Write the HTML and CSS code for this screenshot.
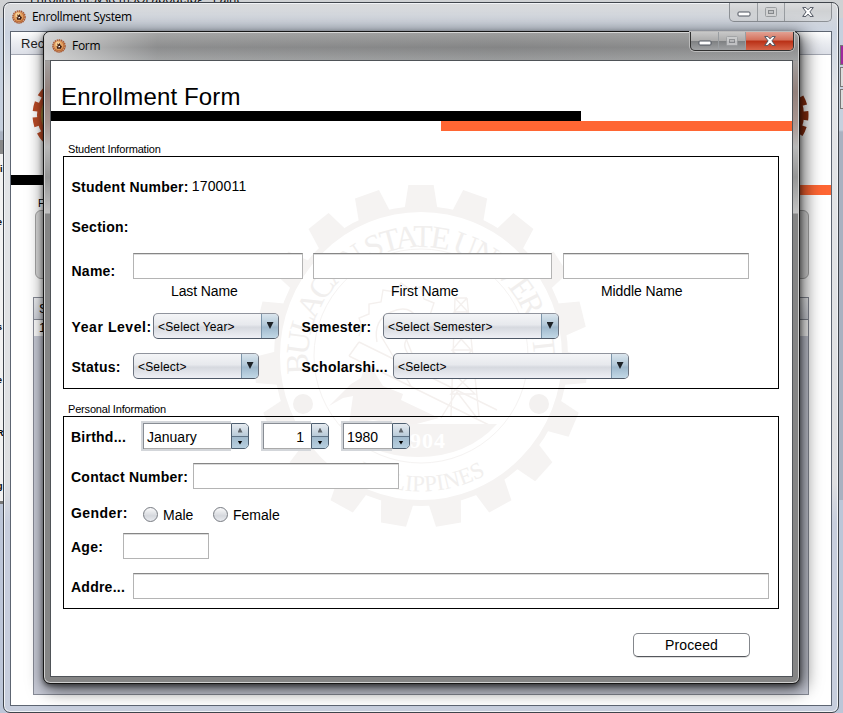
FILE: index.html
```html
<!DOCTYPE html>
<html lang="en">
<head>
<meta charset="utf-8">
<title>Enrollment System</title>
<link rel="stylesheet" href="styles.css">
</head>
<body>
<svg class="defs" width="0" height="0">
  <defs>
    <symbol id="badge" viewBox="0 0 14 14">
      <circle cx="7" cy="7" r="6" fill="none" stroke="#a8572f" stroke-width="1.6" stroke-dasharray="1.5 .6"/>
      <circle cx="7" cy="7" r="5.6" fill="#c0703a"/>
      <circle cx="6.6" cy="6.4" r="4.6" fill="#e3a061"/>
      <circle cx="6" cy="5" r="2.6" fill="#f6cf96"/>
      <path d="M5.2 4.2l1.6 1.4 1-1.8 .7 2.4 1.4 1-1 2.6H5.2L4.6 7l1.2.4z" fill="#3b1b10"/>
      <path d="M6.3 7.2l1.5-.5.3 1.3-1.6.6z" fill="#fff"/>
    </symbol>
    <symbol id="min" viewBox="0 0 14 6"><rect x="1" y="1" width="12" height="4" rx="1" fill="#fff" stroke="#505661"/></symbol>
    <symbol id="max" viewBox="0 0 12 10"><rect x=".5" y=".5" width="11" height="9" rx="1" fill="#d2d3d4" stroke="#9b9ea1"/><rect x="3.5" y="3.5" width="5" height="3" fill="#bfc1c3" stroke="#86898c"/></symbol>
    <symbol id="close" viewBox="0 0 12 10"><path d="M.7.6H4L6 2.8 8 .6h3.3L7.9 4.9l3.4 4.5H8L6 7.1 4 9.4H.7l3.4-4.5z" fill="#fff" stroke="#505661"/></symbol>
  </defs>
</svg>

<div class="desktop">
  <div class="paint-title">EnrollmentSystemSOLabout.jpg - Paint</div>
  <div class="left-edge"><span>i</span><span>e</span><span>t</span><span>s</span><span>e</span><span>R</span><span>g</span></div>
  <div class="right-edge"><i></i><i></i><i></i></div>

  <section class="window back">
    <header class="titlebar">
      <svg class="app-icon"><use href="#badge"/></svg><span>Enrollment System</span>
      <div class="controls"><b><svg class="i-min"><use href="#min"/></svg></b><b><svg class="i-max"><use href="#max"/></svg></b><b class="x"><svg class="i-close"><use href="#close"/></svg></b></div>
    </header>
    <div class="client">
      <div class="menubar">Records</div>
      <div class="masthead">
        <svg width="60" height="70" viewBox="0 0 60 70"><g class="cog"><circle cx="41" cy="35" r="33"/><circle class="teeth" cx="41" cy="35" r="36"/></g></svg>
        <svg width="60" height="70" viewBox="0 0 60 70"><g class="cog dark"><circle cx="19" cy="35" r="33"/><circle class="teeth" cx="19" cy="35" r="36"/></g></svg>
      </div>
      <div class="rule black"></div>
      <div class="rule orange"></div>
      <div class="filter-label">Filter</div>
      <div class="filter-box"></div>
      <div class="table"><div class="thead">Student</div><div class="trow">1</div></div>
    </div>
  </section>

  <section class="window front">
    <header class="titlebar">
      <svg class="app-icon"><use href="#badge"/></svg><span>Form</span>
      <div class="controls"><b><svg class="i-min"><use href="#min"/></svg></b><b><svg class="i-max"><use href="#max"/></svg></b><b class="x"><svg class="i-close"><use href="#close"/></svg></b></div>
    </header>
    <div class="client">
      <svg class="seal" viewBox="-175 -175 350 350">
        <defs>
          <path id="topArc" d="M-112 18A113 112 0 1 1 112 18"/>
          <path id="botArc" d="M-110 78A134 134 0 0 0 110 78"/>
          <path id="tooth" d="M-17-146L-13-171H13L17-146z"/>
        </defs>
        <g transform="scale(.975 1)" fill="#f5f3f2">
          <use href="#tooth"/><use href="#tooth" transform="rotate(18.95)"/><use href="#tooth" transform="rotate(37.9)"/><use href="#tooth" transform="rotate(56.84)"/><use href="#tooth" transform="rotate(75.8)"/><use href="#tooth" transform="rotate(94.74)"/><use href="#tooth" transform="rotate(113.7)"/><use href="#tooth" transform="rotate(132.6)"/><use href="#tooth" transform="rotate(151.6)"/><use href="#tooth" transform="rotate(170.5)"/><use href="#tooth" transform="rotate(189.5)"/><use href="#tooth" transform="rotate(208.4)"/><use href="#tooth" transform="rotate(227.4)"/><use href="#tooth" transform="rotate(246.3)"/><use href="#tooth" transform="rotate(265.3)"/><use href="#tooth" transform="rotate(284.2)"/><use href="#tooth" transform="rotate(303.2)"/><use href="#tooth" transform="rotate(322.1)"/><use href="#tooth" transform="rotate(341.1)"/>
        </g>
        <ellipse rx="144" ry="147" fill="none" stroke="#f5f3f2" stroke-width="6"/>
        <circle r="107" fill="none" stroke="#f5f3f2"/>
        <circle cx="-118" cy="48" r="10" fill="#f3f1f0"/><circle cx="118" cy="48" r="10" fill="#f3f1f0"/>
        <g fill="none" stroke="#f4f0ee" stroke-width="1.4">
          <path d="M-62-20q4-10 0-18l10-4 0-10 12-2 2-12 12 2 6-9 10 7 10-3 3 12 10 4-4 12 6 10-10 5M-44-14q-4-22 14-30t26 6q4 12-6 18t-4 16 12 8"/>
          <path d="M-72 0L70 70M-62-14L76 54M-72 0L-62-14M-40-20l30 50M-20-30l16 40 14 0"/>
          <path d="M34-58h12M34-58L30 60M46-58L58 60M34-58l13 14-14 0 13-14M33-44l15 18-16 0 15-18M32-26l18 20-19 0 17-20M31-6l21 22-21 0 20-22M31 16l23 22-24 0 22-22M20 62l16-26 20 26"/>
        </g>
        <path d="M-92 50l22-22 10-6 4-12 8 4 10 16 20 8-2 6 38 18-30 8-36-6-24 4 4-28-10 2z" fill="#f5f2f1"/>
        <path d="M-82 68H76Q46 101-3 101T-82 68z" fill="#f5f3f2"/>
        <text class="year" x="1" y="92">1904</text>
        <text class="ring"><textPath href="#topArc" textLength="386">BULACAN STATE UNIVERSITY</textPath></text>
        <text class="ring small"><textPath href="#botArc" startOffset="50%">PHILIPPINES</textPath></text>
      </svg>

      <h1>Enrollment Form</h1>
      <div class="rule black"></div>
      <div class="rule orange"></div>

      <div class="legend first">Student Information</div>
      <div class="panel student">
        <div class="row r-number"><label>Student Number:</label><span class="number">1700011</span></div>
        <div class="row r-section"><label>Section:</label></div>
        <div class="row r-name"><label class="w62">Name:</label><div class="field w170"></div><div class="field w239"></div><div class="field w186"></div></div>
        <div class="row captions"><span class="c1">Last Name</span><span class="c2">First Name</span><span class="c3">Middle Name</span></div>
        <div class="row r-year"><label class="w82 wide">Year Level:</label><div class="combo w126"><span>&lt;Select Year&gt;</span><i></i></div><label class="w82 second">Semester:</label><div class="combo w176"><span>&lt;Select Semester&gt;</span><i></i></div></div>
        <div class="row r-status"><label class="w62">Status:</label><div class="combo w126"><span>&lt;Select&gt;</span><i></i></div><label class="w92 third">Scholarshi...</label><div class="combo w236"><span>&lt;Select&gt;</span><i></i></div></div>
      </div>

      <div class="legend">Personal Information</div>
      <div class="panel personal">
        <div class="row r-birth"><label class="w70">Birthd...</label>
          <div class="spinner w108"><span>January</span><div><i class="up"></i><i class="down"></i></div></div>
          <div class="spinner day w68"><span>1</span><div><i class="up"></i><i class="down"></i></div></div>
          <div class="spinner w69"><span>1980</span><div><i class="up"></i><i class="down"></i></div></div>
        </div>
        <div class="row r-contact"><label class="w122">Contact Number:</label><div class="field w206"></div></div>
        <div class="row r-gender"><label class="w71">Gender:</label><span class="radio male"><i></i>Male</span><span class="radio"><i></i>Female</span></div>
        <div class="row r-age"><label class="w52">Age:</label><div class="field w86"></div></div>
        <div class="row r-address"><label class="w62">Addre...</label><div class="field w636"></div></div>
      </div>
      <button class="proceed">Proceed</button>
    </div>
  </section>
</div>
</body>
</html>
```
FILE: styles.css
```css
* { box-sizing: border-box; }
body { margin: 0; font: 14px/16px "Liberation Sans", sans-serif; color: #000; }
.defs { position: absolute; }
.desktop { position: relative; width: 843px; height: 713px; overflow: hidden; background: linear-gradient(#cfd1d3 0 18px, #c6d0de 18px 130px, #a9b1c0 132px 500px, #bcc6d8 500px); }

.paint-title { position: absolute; left: 30px; top: -7px; font: 12px/12px "Open Sans", sans-serif; white-space: nowrap; letter-spacing: -.15px; }
.left-edge { position: absolute; left: 0; top: 140px; width: 4px; height: 364px; background: #f2f2f2; border-top: 14px solid #888; border-bottom: 3px solid #777; font: bold 9px/10px "Liberation Sans", sans-serif; display: flex; flex-direction: column; justify-content: space-between; padding: 10px 0; overflow: hidden; }
.left-edge span { margin-left: -3px; }
.left-edge span:first-child { margin-left: 0; }
.right-edge { position: absolute; left: 840px; top: 45px; width: 3px; display: flex; flex-direction: column; gap: 2px; }
.right-edge i { height: 20px; border: 1px solid #777; border-right: 0; background: #ddd; }
.right-edge i:first-child { background: #a0279e; }

.window { position: absolute; border: 1px solid #3f444b; border-radius: 7px; font-family: "Liberation Sans", sans-serif; }
.back { left: 3px; top: 2px; width: 836px; height: 711px; background: linear-gradient(#d9dadb, #cbd3e0 30px, #e3e5e8 90px, #dedfe1 480px, #c7cedd 520px); box-shadow: inset 0 0 0 1px #f1f3f6; }
.front { left: 43px; top: 31px; width: 757px; height: 653px; border-color: #161616; background: linear-gradient(#0000 28px, #a3a09f 29px, #93807b 60px, #a89590 90px, #b8b8b8 115px, #969696 145px, #c2c2c2 181px, #858585 182px), #909192; box-shadow: inset 0 0 0 1px #d0d0d0, 0 2px 5px rgba(0,0,0,.5), 3px 4px 17px 2px rgba(0,0,0,.62); }
.titlebar { height: 28px; display: flex; align-items: center; padding-left: 8px; border-radius: 6px 6px 0 0; font: 12px/16px "Open Sans", "Noto Sans", sans-serif; }
.back .titlebar span { letter-spacing: -.32px; }
.front .titlebar { background: linear-gradient(90deg, rgba(230,230,230,.75), rgba(170,170,170,.2) 15%, rgba(130,130,130,.2) 60%, rgba(160,160,160,.3)), linear-gradient(#a6a6a6, #858687 55%, #a0a2a3); box-shadow: inset 0 1px #d6d6d6, inset 1px 0 #ccc, inset -1px 0 #ccc; }
.front .titlebar span { letter-spacing: -.3px; }
.app-icon { width: 14px; height: 14px; margin-right: 6px; }
.controls { margin-left: auto; align-self: flex-start; display: flex; height: 19px; border: 1px solid #8d9196; border-top: 0; border-radius: 0 0 5px 5px; overflow: hidden; }
.back .controls { width: 103px; margin-right: 6px; background: linear-gradient(#dcddde, #cfd1d3 45%, #d5d8dc); }
.front .controls { width: 104px; margin-right: 5px; border-color: #303030; background: linear-gradient(#c8c8c8, #acacac 48%, #7d7f81 50%, #a0a2a4); box-shadow: 0 0 0 1px #bbb; }
.controls b { width: 28px; display: flex; align-items: center; justify-content: center; border-right: 1px solid #999da1; }
.controls b + b { width: 27px; }
.controls b.x { flex: 1; border: 0; }
.front .controls b.x { background: linear-gradient(#e2a193, #d4705b 45%, #b92f15 50%, #d5654a); }
.i-min { width: 14px; height: 6px; margin-top: 4px; }
.i-max { width: 12px; height: 10px; margin-top: 0; }
.front .i-max { opacity: .75; }
.i-close { width: 12px; height: 10px; margin-top: 0; }

.client { position: relative; margin: 0 6px; border: 1px solid #4f5358; background: #fff; overflow: hidden; }
.back .client { height: 675px; border-color: #5d6572; }
.front .client { height: 617px; }
.rule { height: 10px; }
.black { background: #000; }
.orange { background: #ff6633; }

.menubar { height: 23px; padding: 4px 0 0 10px; font-size: 13px; letter-spacing: .1px; color: #222; background: linear-gradient(#fff, #eceef2 45%, #dcdfe7); border-bottom: 1px solid #a5a9b4; }
.masthead { height: 120px; display: flex; justify-content: space-between; padding: 25px 21px 0 20px; }
.cog circle { fill: #a38a3c; stroke: #bb4b27; stroke-width: 4; }
.cog .teeth { fill: none; stroke-width: 7; stroke-dasharray: 9 6.08; stroke-dashoffset: 4; }
.cog.dark circle { stroke: #8a2d0e; }
.back .rule.black { width: 500px; }
.back .rule.orange { margin-left: 430px; }
.filter-label { margin: 2px 0 0 27px; font-size: 11px; line-height: 13px; }
.filter-box { width: 774px; height: 69px; margin-left: 24px; border: 1px solid #a5a5a5; border-radius: 6px; background: #dcdcdc; }
.table { width: 776px; height: 398px; margin: 18px 0 0 22px; border: 1px solid #878b96; background: #c9ccd8; font-size: 13px; }
.thead { height: 22px; padding: 3px 5px; background: linear-gradient(#f0f1f4, #d3d6de); border-bottom: 1px solid #878b96; }
.trow { height: 16px; padding-left: 5px; background: #fff; }

.front .client > :not(.seal) { position: relative; }
.seal { position: absolute; left: 195px; top: 120px; width: 350px; height: 350px; }
.ring { font-family: "Liberation Serif", serif; font-size: 32px; fill: #f1efee; }
.ring.small { font-size: 23px; text-anchor: middle; }
.year { font: bold 22px "Liberation Serif", serif; letter-spacing: 1px; text-anchor: middle; fill: #fff; }

h1 { margin: 0; height: 50px; padding: 21px 0 0 10px; font-size: 24px; line-height: 30px; font-weight: normal; letter-spacing: .15px; }
.front .rule.black { width: 530px; }
.front .rule.orange { margin-left: 390px; }
.legend { height: 27px; padding: 14px 0 0 17px; font-size: 11px; line-height: 13px; letter-spacing: -.18px; }
.legend.first { height: 25px; padding-top: 12px; }
.panel { width: 716px; margin-left: 12px; border: 1px solid #000; padding-left: 7px; }
.student { height: 233px; }
.personal { height: 193px; }
.row { display: flex; align-items: center; white-space: nowrap; }
label { font-weight: bold; letter-spacing: .24px; flex: none; }
.row label { padding-top: 1px; }
.student label { padding-left: .5px; }
label.wide { letter-spacing: .58px; }
.r-number { margin-top: 20px; height: 20px; }
.r-section { margin-top: 20px; height: 20px; }
.row.r-number label, .row.r-section label { padding-top: 0; padding-bottom: 1px; }
.number { margin-left: 3px; padding-bottom: 2px; letter-spacing: .2px; }
.r-name { margin-top: 16px; height: 26px; }
.row.r-name label { padding-top: 10px; }
.r-name .field + .field { margin-left: 10px; }
.r-name .field:last-child { margin-left: 11px; }
.captions { margin-top: 4px; height: 16px; letter-spacing: -.1px; }
.c1 { width: 220px; padding-left: 100px; }
.c2 { width: 210px; padding-left: 100px; }
.c3 { padding-left: 100px; }
.r-year { margin-top: 14px; height: 26px; }
.r-status { margin-top: 14px; height: 26px; }
.second { margin-left: 22px; }
.third { margin-left: 42px; }

.field { height: 26px; border: 1px solid #b4b4b4; border-top-color: #868686; background: #fff; box-shadow: inset 0 1px #dcdcdc; }
.combo { height: 26px; display: flex; border: 1px solid #6d7480; border-top-color: #90949d; border-bottom-color: #4e5866; border-radius: 5px; overflow: hidden; background: linear-gradient(#f4f5f7, #e7e9ed 45%, #d6d9df 55%, #eff0f5); font-size: 12px; line-height: 26px; letter-spacing: .15px; }
.combo span { flex: 1; padding-left: 4px; }
.combo i { width: 17px; display: flex; justify-content: center; border-left: 1px solid #7b95aa; background: linear-gradient(#dae5ed, #b3c9d9 45%, #9fb9cd 55%, #c2d8e6); }
.combo i::before { content: ""; width: 7px; height: 7px; margin-top: 8px; background: #1c2227; clip-path: polygon(0 0, 100% 0, 50% 100%); }

.w52 { width: 52px; } .w62 { width: 62px; } .w70 { width: 70px; } .w71 { width: 71px; } .w82 { width: 82px; } .w92 { width: 92px; } .w122 { width: 122px; }
.w86 { width: 86px; } .w126 { width: 126px; } .w170 { width: 170px; } .w176 { width: 176px; } .w186 { width: 186px; } .w206 { width: 206px; } .w236 { width: 236px; } .w239 { width: 239px; } .w636 { width: 636px; }
.w108 { width: 108px; } .w68 { width: 68px; } .w69 { width: 69px; }

.r-birth { margin-top: 4px; height: 30px; }
.spinner { height: 30px; display: flex; align-items: center; margin-right: 12px; }
.spinner span { flex: 1; height: 30px; border: 2px solid #d3d6da; border-right: 0; padding: 6px 0 0 4px; line-height: 16px; background: #fff; box-shadow: inset 1px 1px #888d94, inset 0 -1px #aaa; }
.spinner.day span { text-align: right; padding-right: 7px; }
.spinner div { width: 18px; height: 26px; border: 1px solid #4e5f70; border-radius: 0 5px 5px 0; overflow: hidden; }
.spinner i { height: 12px; display: flex; align-items: center; justify-content: center; background: linear-gradient(#e6ebf0, #b9cbd9); }
.spinner i::before { content: ""; width: 5px; height: 5px; background: #5e646a; clip-path: polygon(50% 0, 100% 100%, 0 100%); }
.spinner .down { background: linear-gradient(#a1bacd, #b7cfdf); border-top: 1px solid #5e7386; }
.spinner .down::before { height: 4px; background: #000; clip-path: polygon(0 0, 100% 0, 50% 100%); }
.r-contact { margin-top: 12px; height: 26px; }
.r-gender { margin-top: 12px; height: 26px; }
.row.r-gender label { padding-bottom: 3px; letter-spacing: .45px; }
.radio { display: flex; align-items: center; padding-top: 1px; }
.radio i { width: 15px; height: 15px; margin: -1px 5px 0 1px; border: 1px solid #777b82; border-radius: 50%; background: linear-gradient(#fafafb, #d5d8dd 60%, #e9ebef); }
.male { width: 70px; }
.r-age { margin-top: 6px; height: 26px; }
.r-address { margin-top: 14px; height: 26px; }
.proceed { display: block; width: 117px; height: 24px; margin: 24px 0 0 582px; padding: 0; border: 1px solid #84878c; border-bottom-color: #54575c; border-radius: 5px; background: #fff; font: 14px/22px "Liberation Sans", sans-serif; letter-spacing: .1px; box-shadow: 0 1px #ddd; }
```
